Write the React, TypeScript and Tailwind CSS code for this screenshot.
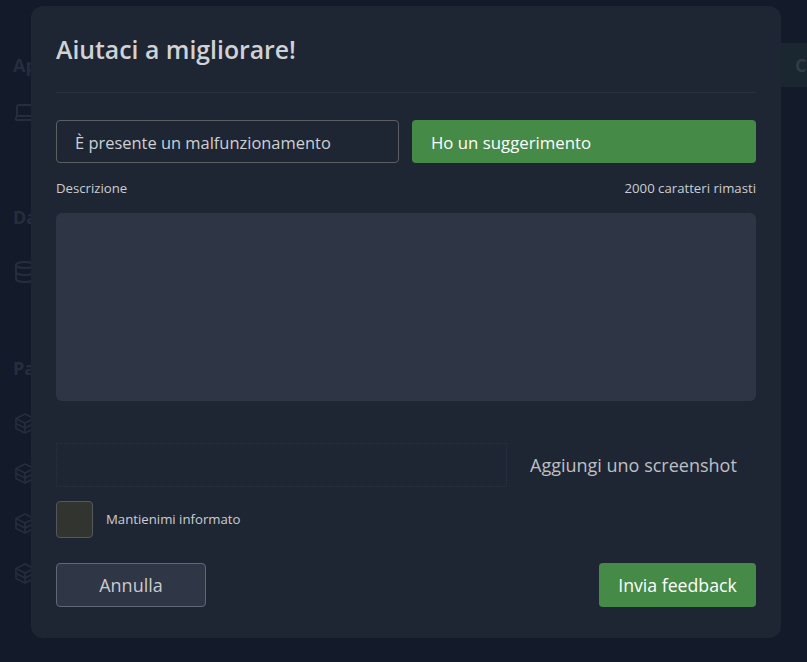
import { Database, Laptop } from 'lucide-react'

const font = { fontFamily: '"Open Sans", "Noto Sans", sans-serif' }

function StackIcon() {
  return (
    <svg viewBox="0 0 24 24" fill="none" stroke="currentColor" strokeWidth="1.6" strokeLinejoin="round" className="h-[24px] w-[24px]">
      <path d="M12 2 3 6.5v5L12 16l9-4.5v-5L12 2Z" />
      <path d="M3 6.5 12 11l9-4.5M12 11v5" />
      <path d="M3 11.5v5L12 21l9-4.5v-5" />
      <path d="M12 16v5" />
    </svg>
  )
}

function BackgroundPage() {
  return (
    <div className="flex h-full flex-col bg-[#131a29] pl-[13px] text-[#262e3e]">
      <div className="mt-[42px] flex h-[46px] items-center justify-between">
        <span className="text-lg font-bold">App</span>
        <div className="flex h-[44px] w-[26px] items-center bg-[#1a2630] pl-[14px] text-lg font-bold text-[#333c45]">C</div>
      </div>
      <Laptop className="mt-[12px] h-[24px] w-[24px]" />
      <span className="mt-[79px] text-lg font-bold">Dati</span>
      <Database className="mt-[29px] h-[24px] w-[24px]" />
      <span className="mt-[70px] text-lg font-bold">Pacchetti</span>
      <div className="mt-[30px] flex flex-col gap-[26px]">
        <StackIcon />
        <StackIcon />
        <StackIcon />
        <StackIcon />
      </div>
    </div>
  )
}

export default function App() {
  return (
    <div className="relative h-[662px] w-[807px] overflow-hidden" style={font}>
      <BackgroundPage />

      {/* modal */}
      <div className="absolute left-[31px] top-[6px] flex h-[632px] w-[750px] flex-col rounded-xl bg-[#1f2633] px-[25px]">
        <div className="flex h-[87px] items-start border-b border-[#293040] pt-[24px]">
          <h1 className="text-[24.8px] leading-[38px] font-semibold text-[#d1d2d5]">Aiutaci a migliorare!</h1>
        </div>

        <div className="mt-[27px] flex gap-[13px]">
          <button className="h-[43px] w-[343px] rounded border border-[#5b5f63] pl-[18px] pt-[3px] text-left text-[16.45px] text-[#cfd0d3]">È presente un malfunzionamento</button>
          <button className="h-[43px] flex-1 rounded bg-[#458a47] pl-[19px] pt-[2px] text-left text-[16.8px] font-medium text-white">Ho un suggerimento</button>
        </div>

        <div className="mt-[16px] flex items-center justify-between text-[13.2px] leading-[18px] text-[#cbcdd1]">
          <span>Descrizione</span>
          <span>2000 caratteri rimasti</span>
        </div>

        <textarea className="mt-[16px] h-[188px] w-full resize-none rounded-md bg-[#2e3545] outline-none" />

        <div className="mt-[42px] flex items-center">
          <div className="h-[44px] w-[451px] border border-dotted border-[#2a3140]" />
          <span className="ml-[23px] text-lg text-[#bdbfc4]">Aggiungi uno screenshot</span>
        </div>

        <div className="mt-[14px] flex items-center gap-[13px]">
          <div className="h-[37px] w-[37px] rounded border border-[#55585a] bg-[#32342f]" />
          <span className="pt-[1px] text-[13.2px] text-[#cbcdd1]">Mantienimi informato</span>
        </div>

        <div className="mt-[25px] flex justify-between">
          <button className="h-[44px] w-[150px] rounded border border-[#5f6879] bg-[#2f3646] text-lg text-[#c9cbcf]">Annulla</button>
          <button className="h-[44px] w-[157px] rounded bg-[#458a47] text-[17.7px] font-medium text-white">Invia feedback</button>
        </div>
      </div>
    </div>
  )
}
